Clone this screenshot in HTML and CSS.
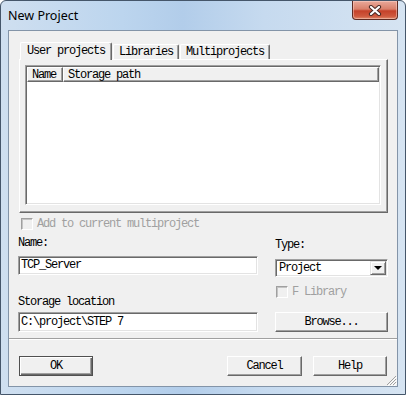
FILE: index.html
```html
<!DOCTYPE html>
<html>
<head>
<meta charset="utf-8">
<link rel="stylesheet" href="styles.css">
</head>
<body>
<div class="window">
  <div class="titlebar">
    <span class="title">New Project</span>
    <div class="close">
      <svg width="14" height="11" viewBox="0 0 14 11">
        <path d="M3 2 L11 9 M11 2 L3 9" stroke="#4a2a25" stroke-width="4.2" stroke-linecap="round"/>
        <path d="M3 2 L11 9 M11 2 L3 9" stroke="#ffffff" stroke-width="2.2" stroke-linecap="round"/>
      </svg>
    </div>
  </div>
  <div class="client">
    <div class="tabctl">
      <div class="tabstrip">
        <div class="tab active">User projects</div>
        <div class="tab">Libraries</div>
        <div class="tab">Multiprojects</div>
      </div>
      <div class="panel">
        <div class="list">
          <div class="lhead">
            <div class="hcell c1">Name</div>
            <div class="hcell c2">Storage path</div>
          </div>
        </div>
      </div>
    </div>
    <div class="check disabled multi"><span class="box"></span><span>Add to current multiproject</span></div>
    <div class="fields">
      <div class="fcol left">
        <div class="label name-label">Name:</div>
        <div class="input name-input">TCP_Server</div>
        <div class="label loc-label">Storage location</div>
        <div class="input loc-input">C:\project\STEP 7</div>
      </div>
      <div class="fcol right">
        <div class="label type-label">Type:</div>
        <div class="combo">
          <span class="combo-text">Project</span>
          <span class="combo-btn"><span class="arrow"></span></span>
        </div>
        <div class="check disabled flib"><span class="box"></span><span>F Library</span></div>
        <div class="button browse">Browse...</div>
      </div>
    </div>
    <div class="sep"></div>
    <div class="buttons">
      <div class="button default ok">OK</div>
      <div class="button cancel">Cancel</div>
      <div class="button help">Help</div>
    </div>
    <svg class="grip" width="11" height="11" viewBox="0 0 11 11">
      <path d="M10 1 L1 10 M10 4 L4 10 M10 7 L7 10" stroke="#a0a0a0" stroke-width="1"/>
      <path d="M11 2 L2 11 M11 5 L5 11 M11 8 L8 11" stroke="#ffffff" stroke-width="1"/>
    </svg>
  </div>
</div>
</body>
</html>
```

FILE: styles.css
```css
html, body {
  margin: 0;
  padding: 0;
  background: #ffffff;
}

.window {
  width: 406px;
  height: 395px;
  box-sizing: border-box;
  border: 1px solid #45566a;
  border-radius: 6px 6px 0 0;
  padding: 0 7px 7px 7px;
  background: linear-gradient(to right, #cfdff0 0%, #bcd5ee 30%, #b2cdea 45%, #c6daef 65%, #d6e4f2 100%);
  display: flex;
  flex-direction: column;
  font-family: "Liberation Mono", "DejaVu Sans Mono", monospace;
  font-size: 12px;
  letter-spacing: -1.2px;
  color: #000;
}

.titlebar {
  height: 29px;
  display: flex;
  align-items: flex-start;
  justify-content: space-between;
}

.title {
  font-family: "Noto Sans", "Open Sans", sans-serif;
  font-size: 12.5px;
  letter-spacing: 0;
  margin-top: 6px;
  color: #000;
}

.close {
  width: 46px;
  height: 19px;
  box-sizing: border-box;
  border: 1px solid #5e2b23;
  border-top: none;
  border-radius: 0 0 4px 4px;
  background: linear-gradient(to bottom, #e9a99a 0%, #d9806b 45%, #c5412a 55%, #cf5a3f 85%, #e08a6c 100%);
  display: flex;
  align-items: center;
  justify-content: center;
  box-shadow: inset 0 0 0 1px rgba(255, 220, 210, 0.45);
}

.client {
  position: relative;
  flex: 1;
  box-sizing: border-box;
  border: 1px solid #8394a8;
  background: #f0f0f0;
  display: flex;
  flex-direction: column;
}

/* tab control */
.tabctl {
  margin: 11px 0 0 10px;
  width: 369px;
  display: flex;
  flex-direction: column;
}

.tabstrip {
  height: 17px;
  display: flex;
  align-items: flex-end;
  padding-left: 1px;
}

.tab {
  height: 15px;
  box-sizing: border-box;
  padding: 0 5px;
  line-height: 14px;
  border-top: 1px solid #ffffff;
  border-left: 1px solid #ffffff;
  border-right: 1px solid #696969;
  border-radius: 2px 2px 0 0;
  box-shadow: inset -1px 0 0 #a0a0a0;
  background: #f0f0f0;
  margin-right: 1px;
}

.tab.active {
  height: 18px;
  padding: 0 6px;
  line-height: 16px;
  margin-bottom: -1px;
  position: relative;
  z-index: 1;
  margin-right: 1px;
}

.panel {
  height: 154px;
  box-sizing: border-box;
  border-top: 1px solid #ffffff;
  border-left: 1px solid #ffffff;
  border-right: 1px solid #696969;
  border-bottom: 1px solid #696969;
  box-shadow: inset -1px -1px 0 #a0a0a0;
  padding: 5px 0 0 5px;
}

.list {
  width: 356px;
  height: 140px;
  box-sizing: border-box;
  background: #ffffff;
  border: 1px solid;
  border-color: #a0a0a0 #ffffff #ffffff #a0a0a0;
  box-shadow: inset 1px 1px 0 #696969, inset -1px -1px 0 #e3e3e3;
  padding: 1px 0 0 1px;
}

.lhead {
  display: flex;
  height: 15px;
}

.hcell {
  box-sizing: border-box;
  height: 15px;
  line-height: 14px;
  background: #f0f0f0;
  border-top: 1px solid #ffffff;
  border-left: 1px solid #ffffff;
  border-right: 1px solid #696969;
  border-bottom: 1px solid #696969;
  box-shadow: inset -1px -1px 0 #a0a0a0;
  padding-left: 4px;
}

.c1 { width: 36px; }
.c2 { width: 316px; }

/* check boxes */
.check {
  display: flex;
  align-items: center;
  height: 12px;
  line-height: 12px;
}

.check.disabled { color: #a0a0a0; }

.check .box {
  width: 12px;
  height: 12px;
  box-sizing: border-box;
  border: 1px solid;
  border-color: #a0a0a0 #ffffff #ffffff #a0a0a0;
  box-shadow: inset 1px 1px 0 #c4c4c4;
  background: #f0f0f0;
  margin-right: 4px;
}

.multi {
  margin: 5px 0 0 12px;
}

/* fields */
.fields {
  display: flex;
  margin-left: 9px;
}

.fcol {
  display: flex;
  flex-direction: column;
}

.fcol.left { width: 240px; }
.fcol.right { width: 113px; margin-left: 17px; }

.label {
  height: 12px;
  line-height: 12px;
}

.name-label { margin-top: 7px; }
.loc-label { margin-top: 21px; }
.type-label { margin-top: 9px; }

.input {
  box-sizing: border-box;
  background: #ffffff;
  border: 1px solid;
  border-color: #a0a0a0 #ffffff #ffffff #a0a0a0;
  box-shadow: inset 1px 1px 0 #696969, inset -1px -1px 0 #e3e3e3;
  padding-left: 2px;
}

.name-input {
  margin-top: 7px;
  height: 19px;
  line-height: 17px;
}

.loc-input {
  margin-top: 4px;
  height: 20px;
  line-height: 18px;
}

.combo {
  margin-top: 8px;
  height: 18px;
  box-sizing: border-box;
  background: #ffffff;
  border: 1px solid;
  border-color: #a0a0a0 #ffffff #ffffff #a0a0a0;
  box-shadow: inset 1px 1px 0 #696969, inset -1px -1px 0 #e3e3e3;
  display: flex;
  align-items: stretch;
  padding: 1px 1px 1px 3px;
}

.combo-text {
  flex: 1;
  line-height: 14px;
}

.combo-btn {
  width: 16px;
  box-sizing: border-box;
  background: #f0f0f0;
  border-top: 1px solid #e3e3e3;
  border-left: 1px solid #e3e3e3;
  border-right: 1px solid #696969;
  border-bottom: 1px solid #696969;
  box-shadow: inset 1px 1px 0 #ffffff, inset -1px -1px 0 #a0a0a0;
  display: flex;
  align-items: center;
  justify-content: center;
}

.arrow {
  width: 0;
  height: 0;
  border-left: 4px solid transparent;
  border-right: 4px solid transparent;
  border-top: 4px solid #000000;
}

.flib {
  margin-top: 9px;
  margin-left: 1px;
}

/* buttons */
.button {
  box-sizing: border-box;
  height: 20px;
  line-height: 18px;
  text-align: center;
  background: #f0f0f0;
  border-top: 1px solid #ffffff;
  border-left: 1px solid #ffffff;
  border-right: 1px solid #696969;
  border-bottom: 1px solid #696969;
  box-shadow: inset -1px -1px 0 #a0a0a0;
}

.button.default {
  border: 1px solid #505050;
  box-shadow: inset 1px 1px 0 #ffffff, inset -1px -1px 0 #696969, inset -2px -2px 0 #a0a0a0;
}

.browse {
  margin-top: 14px;
}

.sep {
  margin-top: 6px;
  border-top: 1px solid #a0a0a0;
  border-bottom: 1px solid #ffffff;
  height: 0;
}

.buttons {
  margin-top: 16px;
  display: flex;
  padding: 0 10px;
}

.ok { width: 74px; }
.cancel { width: 75px; margin-left: auto; }
.help { width: 74px; margin-left: 11px; }

.grip {
  position: absolute;
  right: 0;
  bottom: 0;
}
```
